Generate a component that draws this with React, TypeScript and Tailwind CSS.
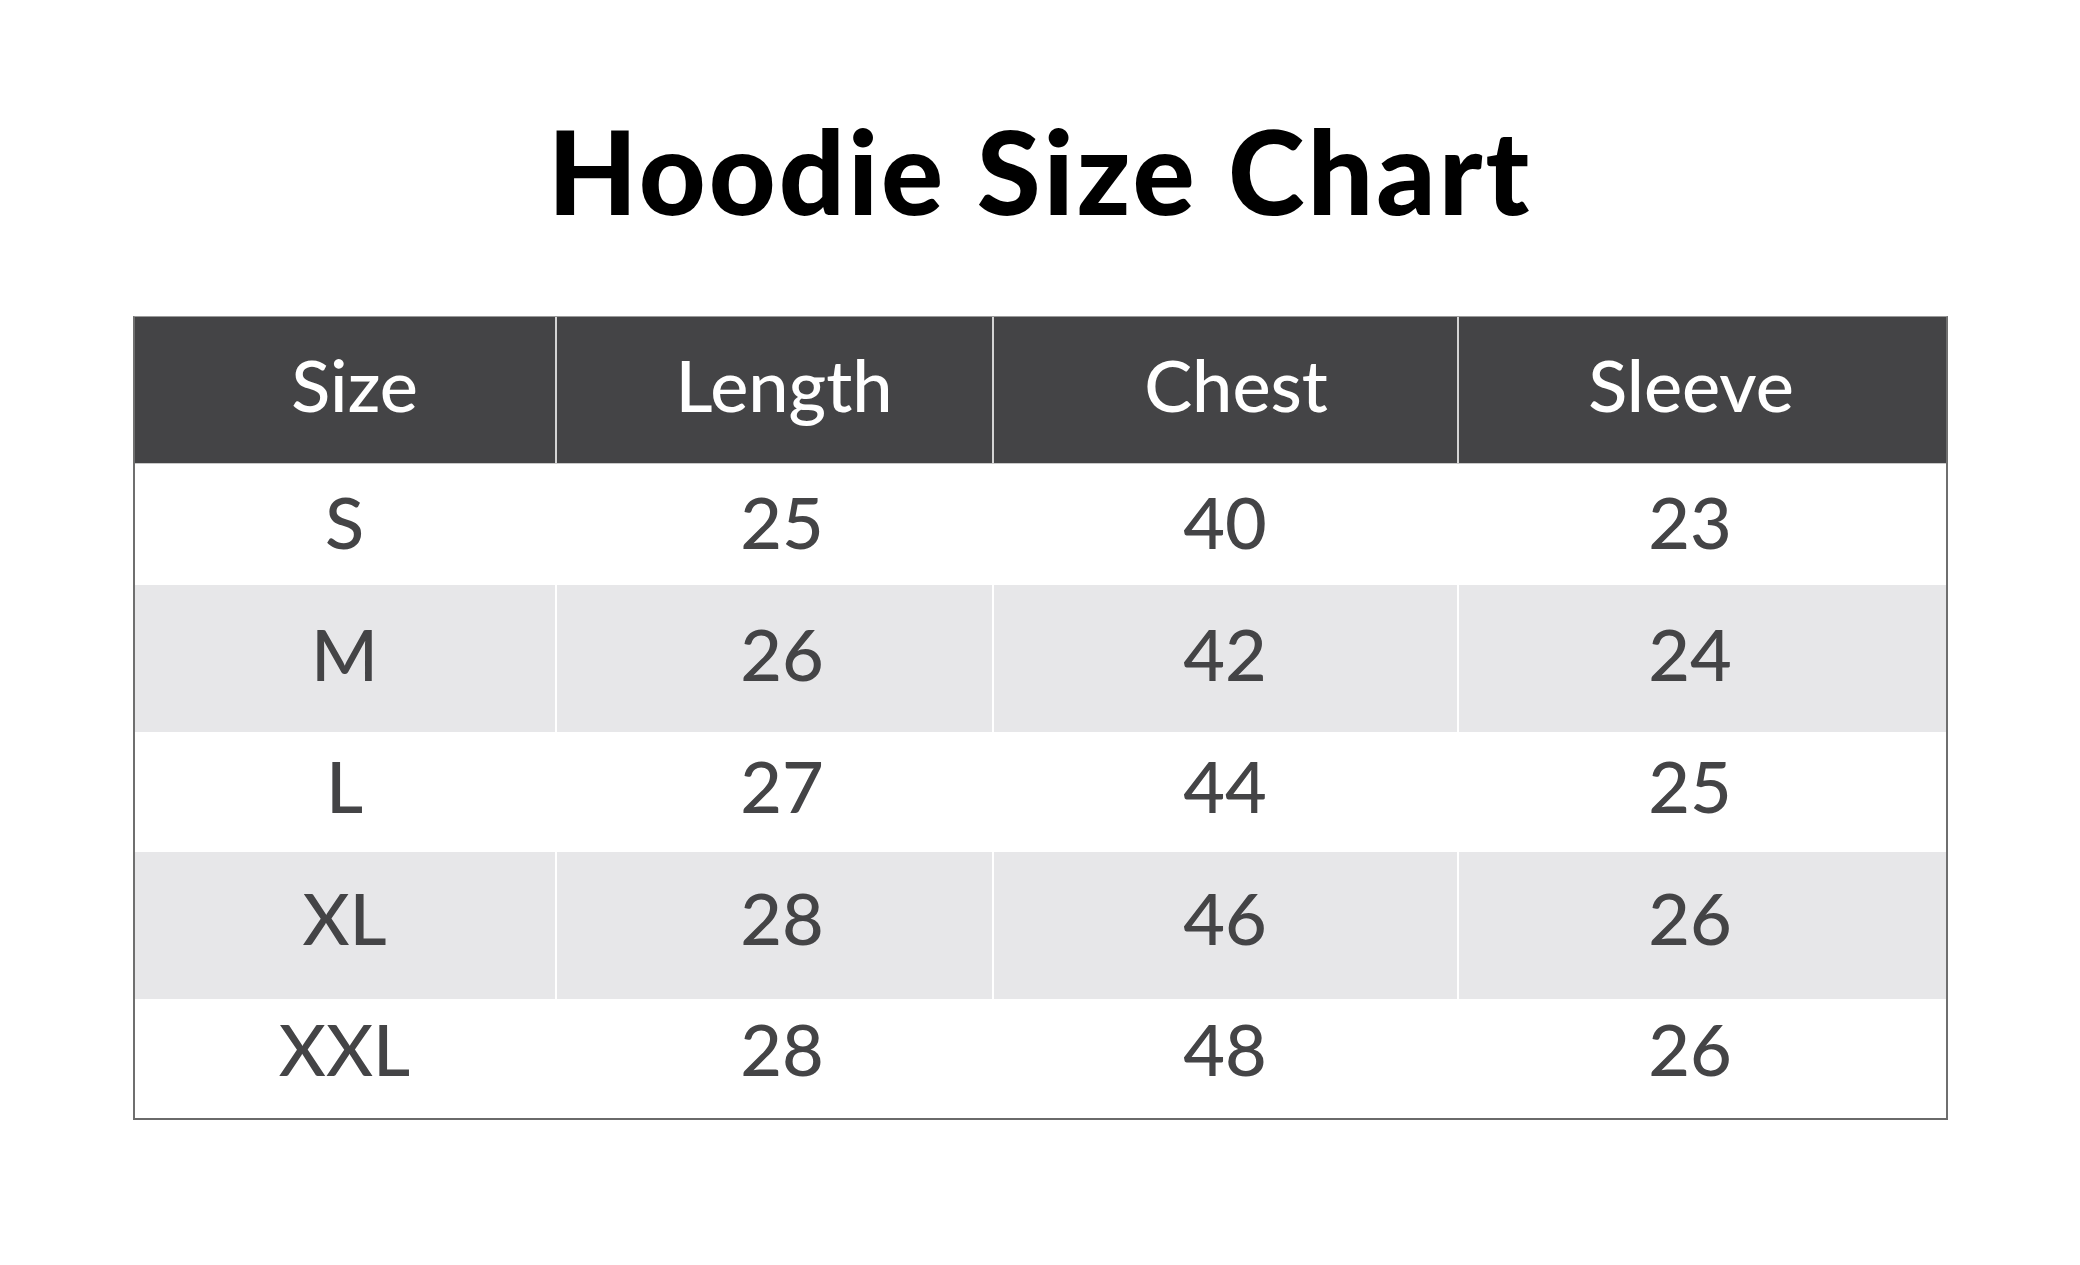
const headers = ["Size", "Length", "Chest", "Sleeve"];

// per-column nudges so the text sits where it does in the original chart
const headPad = ["pl-[20px]", "pl-[20px]", "pl-[22px]", "pr-[22px]"];
const bodyPad = ["", "pl-[16px]", "", "pr-[24px]"];

const rows = [
  { cells: ["S", "25", "40", "23"], bg: "bg-white", h: "h-[121px]", pb: "pb-[7px]" },
  { cells: ["M", "26", "42", "24"], bg: "bg-[#e7e7e9]", h: "h-[147px]", pb: "pb-[12px]" },
  { cells: ["L", "27", "44", "25"], bg: "bg-white", h: "h-[120px]", pb: "pb-[14px]" },
  { cells: ["XL", "28", "46", "26"], bg: "bg-[#e7e7e9]", h: "h-[147px]", pb: "pb-[18px]" },
  { cells: ["XXL", "28", "48", "26"], bg: "bg-white", h: "h-[119px]", pb: "pb-[22px]" },
];

const cols = "grid grid-cols-[420px_437px_465px_489px]";

export default function App() {
  return (
    <div className="flex h-[1265px] w-full flex-col items-center bg-white font-['Lato','Liberation_Sans',sans-serif]">
      {/* Title */}
      <h1 className="mt-[113px] text-[116px] font-black leading-none tracking-[3px] text-black">
        Hoodie Size Chart
      </h1>

      {/* Table */}
      <div className="mt-[87px] w-[1815px] border-x-2 border-b-2 border-t border-x-[#6f6f6f] border-b-[#6a6a6a] border-t-[#9a9a9a]">
        <div className={`${cols} h-[147px] border-b border-[#c9c9c9] bg-[#444446]`}>
          {headers.map((h, i) => (
            <div
              key={h}
              className={`flex items-center justify-center pb-[12px] ${headPad[i]} text-[72px] font-medium leading-none text-white ${
                i > 0 ? "border-l-2 border-[#d4d4d4]" : ""
              }`}
            >
              {h}
            </div>
          ))}
        </div>

        {rows.map((row) => (
          <div key={row.cells[0]} className={`${cols} ${row.h} ${row.bg}`}>
            {row.cells.map((c, i) => (
              <div
                key={i}
                className={`flex items-center justify-center ${row.pb} ${bodyPad[i]} text-[72px] font-medium leading-none text-[#444446] ${
                  i > 0 ? "border-l-2 border-white" : ""
                }`}
              >
                {c}
              </div>
            ))}
          </div>
        ))}
      </div>
    </div>
  );
}
